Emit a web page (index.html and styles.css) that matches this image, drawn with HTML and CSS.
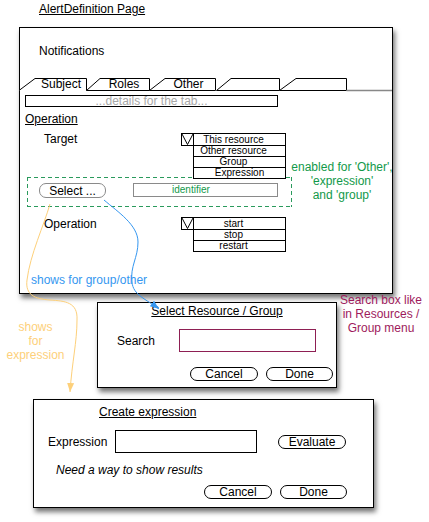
FILE: index.html
```html
<!DOCTYPE html>
<html>
<head>
<meta charset="utf-8">
<link rel="stylesheet" href="styles.css">
</head>
<body>
<div class="canvas">
  <div class="page-title">AlertDefinition Page</div>

  <div class="window main">
    <div class="notif">Notifications</div>
    <svg class="tabs" width="372" height="15" viewBox="0 0 372 15">
      <g fill="#fff" stroke="#000" stroke-width="1">
        <path d="M-1,13.5 L15,1.5 L66.5,1.5 L66.5,13.5"/>
        <path d="M66.5,13.5 L80,1.5 L129.5,1.5 L129.5,13.5 Z"/>
        <path d="M129.5,13.5 L145,1.5 L195.5,1.5 L195.5,13.5 Z"/>
        <path d="M196.5,13.5 L211,1.5 L259.5,1.5 L259.5,13.5 Z"/>
        <path d="M259.5,13.5 L276,1.5 L326.5,1.5 L326.5,13.5 Z"/>
      </g>
      <line x1="326.5" y1="13.5" x2="372" y2="13.5" stroke="#888" stroke-width="1.5"/>
      <text class="tab-text" x="41" y="11" text-anchor="middle">Subject</text>
      <text class="tab-text" x="104" y="11" text-anchor="middle">Roles</text>
      <text class="tab-text" x="168.5" y="11" text-anchor="middle">Other</text>
    </svg>
    <div class="details">...details for the tab...</div>
    <div class="section-head">Operation</div>

    <div class="field-row target-row">
      <div class="field-label">Target</div>
      <div class="select">
        <svg class="check" width="13" height="13" viewBox="0 0 13 13">
          <rect x="0.5" y="0.5" width="12" height="12" fill="#fff" stroke="#000"/>
          <polyline points="1,1 6.5,11.5 12,1" fill="none" stroke="#000"/>
        </svg>
        <ul class="opts">
          <li class="h11">This resource</li>
          <li>Other resource</li>
          <li>Group</li>
          <li class="nopad">Expression</li>
        </ul>
      </div>
    </div>

    <div class="dashed">
      <div class="pill select-btn">Select ...</div>
      <div class="ident">identifier</div>
    </div>

    <div class="field-row op-row">
      <div class="field-label op-label">Operation</div>
      <div class="select">
        <svg class="check" width="13" height="13" viewBox="0 0 13 13">
          <rect x="0.5" y="0.5" width="12" height="12" fill="#fff" stroke="#000"/>
          <polyline points="1,1 6.5,11.5 12,1" fill="none" stroke="#000"/>
        </svg>
        <ul class="opts">
          <li class="h11">start</li>
          <li>stop</li>
          <li>restart</li>
        </ul>
      </div>
    </div>
  </div>

  <div class="note note-green">enabled for 'Other',<br>'expression'<br>and 'group'</div>
  <div class="note note-blue">shows for group/other</div>
  <div class="note note-orange">shows<br>for<br>expression</div>
  <div class="note note-maroon">Search box like<br>in Resources /<br>Group menu</div>

  <div class="window dialog-select">
    <div class="dlg-title centered">Select Resource / Group</div>
    <div class="dlg-row search-row">
      <div class="dlg-label search-label">Search</div>
      <div class="input search-input"></div>
    </div>
    <div class="btn-row select-btns">
      <div class="pill btn-cancel">Cancel</div>
      <div class="pill btn-done">Done</div>
    </div>
  </div>

  <div class="window dialog-expr">
    <div class="dlg-title expr-title">Create expression</div>
    <div class="dlg-row expr-row">
      <div class="dlg-label expr-label">Expression</div>
      <div class="input expr-input"></div>
      <div class="pill btn-eval">Evaluate</div>
    </div>
    <div class="results-note">Need a way to show results</div>
    <div class="btn-row expr-btns">
      <div class="pill btn-cancel">Cancel</div>
      <div class="pill btn-done">Done</div>
    </div>
  </div>

  <svg class="connectors" width="429" height="522" viewBox="0 0 429 522">
    <defs>
      <marker id="arrow-blue" markerUnits="userSpaceOnUse" markerWidth="10" markerHeight="8" refX="9" refY="3.5" orient="auto">
        <path d="M0,0 L9,3.5 L0,7 Z" fill="#3597f0"/>
      </marker>
      <marker id="arrow-orange" markerUnits="userSpaceOnUse" markerWidth="10" markerHeight="8" refX="9" refY="3.5" orient="auto">
        <path d="M0,0 L9,3.5 L0,7 Z" fill="#fdd07a"/>
      </marker>
    </defs>
    <path d="M104,200 C118,212 138,225 138,242 C138,258 130,266 132,282 C133,295 146,299 159,309" fill="none" stroke="#3597f0" stroke-width="1" marker-end="url(#arrow-blue)"/>
    <path d="M50,204 C44,225 30,255 27,280 C25,295 35,299 50,300 C65,301 78,302 77,320 C77,342 72,362 70,392" fill="none" stroke="#fdd07a" stroke-width="1" marker-end="url(#arrow-orange)"/>
  </svg>
</div>
</body>
</html>
```

FILE: styles.css
```css
html, body {
  margin: 0;
  padding: 0;
  background: #fff;
}

.canvas {
  position: relative;
  width: 429px;
  height: 522px;
  overflow: hidden;
  font-family: "Liberation Sans", Arial, sans-serif;
  font-size: 12px;
  line-height: 14px;
  color: #000;
  background: #fff;
}

.page-title {
  position: absolute;
  left: 39px;
  top: 2px;
  text-decoration: underline;
}

.window {
  position: absolute;
  box-sizing: border-box;
  border: 1px solid #000;
  background: #fff;
  box-shadow: 2px 4px 5px rgba(0, 0, 0, 0.55);
}

.main {
  left: 19px;
  top: 27px;
  width: 374px;
  height: 267px;
}

.notif {
  margin: 16px 0 0 19px;
}

.tabs {
  display: block;
  margin-top: 19px;
  overflow: visible;
}

.tab-text {
  font-family: "Liberation Sans", Arial, sans-serif;
  font-size: 12px;
  fill: #000;
}

.details {
  box-sizing: border-box;
  margin: 3px 0 0 5px;
  width: 253px;
  height: 12px;
  border: 1px solid #000;
  color: #a8a8a8;
  text-align: center;
  line-height: 10px;
  font-size: 12px;
}

.section-head {
  margin: 5px 0 0 5px;
  text-decoration: underline;
}

.field-row {
  display: flex;
  align-items: flex-start;
  padding-left: 24px;
}

.target-row {
  margin-top: 7px;
}

.op-row {
  margin-top: 10px;
}

.field-label {
  width: 137px;
  line-height: 12px;
}

.op-label {
  padding-top: 1px;
}

.select {
  display: flex;
  align-items: flex-start;
  position: relative;
  z-index: 1;
}

.check {
  display: block;
}

.opts {
  list-style: none;
  margin: 0 0 0 -1px;
  padding: 0;
  width: 93px;
  box-sizing: border-box;
  border: 1px solid #000;
  background: #fff;
  font-size: 10px;
}

.opts li {
  height: 10px;
  line-height: 10px;
  border-top: 1px solid #000;
  text-align: center;
  padding-right: 12px;
}

.opts li.h11 {
  height: 11px;
  line-height: 11px;
  border-top: none;
}

.opts li.nopad {
  padding-right: 0;
}

.dashed {
  box-sizing: border-box;
  display: flex;
  align-items: flex-start;
  gap: 27px;
  margin: -2px 0 0 7px;
  width: 265px;
  height: 30px;
  padding: 6px 0 0 12px;
  background:
    linear-gradient(to right, #2a9a5c 4px, transparent 4px) left top / 7px 1px repeat-x,
    linear-gradient(to right, #2a9a5c 4px, transparent 4px) left bottom / 7px 1px repeat-x,
    linear-gradient(to bottom, #2a9a5c 4px, transparent 4px) left top / 1px 7px repeat-y,
    linear-gradient(to bottom, #2a9a5c 4px, transparent 4px) right top / 1px 7px repeat-y;
}

.pill {
  box-sizing: border-box;
  display: flex;
  align-items: center;
  justify-content: center;
  height: 14px;
  border: 1px solid #000;
  border-radius: 7px;
  background: #fff;
  line-height: 12px;
}

.select-btn {
  width: 67px;
  height: 15px;
  border-color: #8a8a8a;
}

.ident {
  box-sizing: border-box;
  width: 145px;
  height: 14px;
  border: 1px solid #8a8a8a;
  padding-left: 38px;
  color: #12994a;
  font-size: 10px;
  line-height: 12px;
}

.note {
  position: absolute;
  text-align: center;
  line-height: 14.2px;
}

.note-green {
  left: 290px;
  top: 160px;
  width: 104px;
  color: #12994a;
}

.note-blue {
  left: 31px;
  top: 273px;
  color: #3597f0;
  text-align: left;
}

.note-orange {
  left: 0;
  top: 320px;
  width: 71px;
  color: #fdd07a;
}

.note-maroon {
  left: 336px;
  top: 293px;
  width: 90px;
  color: #9e1a5c;
}

.dialog-select {
  left: 97px;
  top: 302px;
  width: 240px;
  height: 86px;
}

.dialog-expr {
  left: 33px;
  top: 399px;
  width: 341px;
  height: 109px;
}

.dlg-title {
  text-decoration: underline;
}

.centered {
  text-align: center;
  margin-top: 1px;
}

.dlg-row {
  display: flex;
  align-items: center;
}

.input {
  box-sizing: border-box;
  height: 23px;
  border: 1px solid #000;
  background: #fff;
}

.search-row {
  margin-top: 11px;
  padding-left: 19px;
}

.search-label {
  width: 62px;
}

.search-input {
  width: 137px;
  border-color: #8e1f53;
}

.btn-row {
  display: flex;
  justify-content: flex-end;
  gap: 8px;
}

.select-btns {
  margin-top: 15px;
  padding-right: 3px;
}

.btn-cancel {
  width: 68px;
}

.btn-done {
  width: 67px;
}

.expr-title {
  margin-top: 5px;
  padding-left: 65px;
}

.expr-row {
  margin-top: 11px;
  padding-left: 14px;
}

.expr-label {
  width: 67px;
}

.expr-input {
  width: 142px;
}

.btn-eval {
  width: 68px;
  margin-left: 21px;
}

.results-note {
  margin-top: 10px;
  padding-left: 22px;
  font-style: italic;
}

.expr-btns {
  margin-top: 8px;
  padding-right: 26px;
}

.connectors {
  position: absolute;
  left: 0;
  top: 0;
  pointer-events: none;
  z-index: 5;
}
```
